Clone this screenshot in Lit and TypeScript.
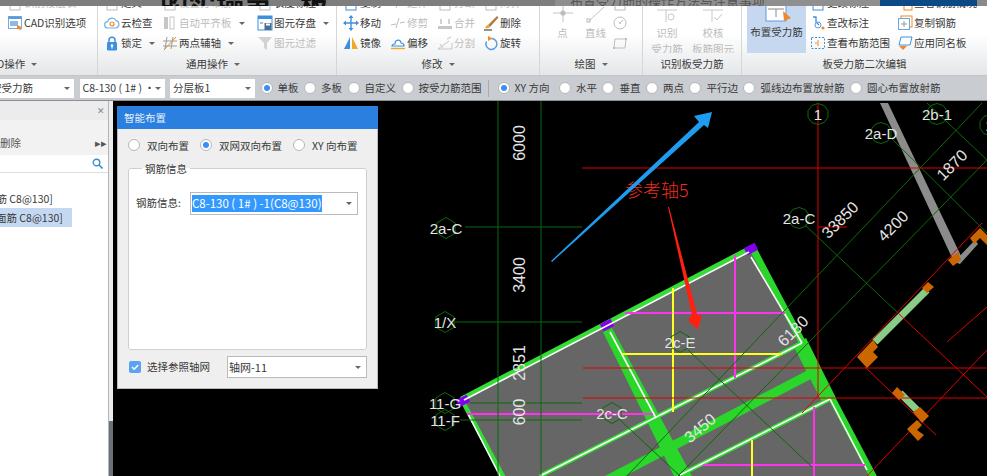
import { LitElement, html, css, svg, nothing } from "lit";
import { customElement } from "lit/decorators.js";

const BLUE = "#3f8fe0";
const ORANGE = "#f0882a";
const GREY = "#c6c6c6";

// small ribbon icons, all on a 16x16 box
const icons: Record<string, unknown> = {
  cad: svg`<rect x="1.5" y="1.5" width="13" height="12" fill="#fff" stroke="#7fa9d6"/><rect x="1.5" y="1.5" width="13" height="2.5" fill="#5a9be0"/><rect x="3" y="6" width="8" height="5" fill="#8db9ea"/><path d="M10 10l5 2-2 1 1 2-1 .5-1-2-2 1z" fill="${ORANGE}"/>`,
  cloud: svg`<path d="M4 13a3.2 3.2 0 0 1-.3-6.4A4.4 4.4 0 0 1 12 5.6 3.8 3.8 0 0 1 12 13z" fill="#fff" stroke="#6db3ee" stroke-width="1.2"/><circle cx="8" cy="9" r="2" fill="none" stroke="${ORANGE}" stroke-width="1.2"/>`,
  lock: svg`<path d="M5 8V5.2a3 3 0 0 1 6 0V8" fill="none" stroke="${BLUE}" stroke-width="1.5"/><rect x="3" y="7" width="10" height="8.5" rx="1.2" fill="${BLUE}"/><circle cx="8" cy="10.5" r="1.3" fill="#fff"/><rect x="7.4" y="10.5" width="1.2" height="3" fill="#fff"/>`,
  level: svg`<rect x="2" y="2" width="4" height="12" fill="${GREY}"/><rect x="8" y="2" width="4" height="12" fill="none" stroke="${GREY}"/>`,
  axis: svg`<path d="M5 2L3 14M11 2L9 14M1 6h14M1 11h14" stroke="#9a9a9a" fill="none"/><path d="M2 15L14 2" stroke="${ORANGE}"/>`,
  save: svg`<rect x="1" y="1" width="14" height="14" fill="#fff" stroke="${BLUE}"/><rect x="1" y="1" width="14" height="3" fill="${BLUE}"/><rect x="7.5" y="8" width="7" height="7" fill="#4a6f96"/><rect x="9" y="8.5" width="4" height="2" fill="#fff"/><rect x="3" y="7" width="3" height="2" fill="#9cc3ec"/>`,
  filter: svg`<path d="M1 2h14l-5 6v7l-3-2V8z" fill="#d2d2d2"/>`,
  move: svg`<path d="M8 2v12M2 8h12" stroke="${BLUE}" stroke-width="1.4"/><path d="M8 0l2.5 3h-5zM8 16l2.5-3h-5zM0 8l3-2.5v5zM16 8l-3-2.5v5z" fill="${BLUE}"/>`,
  trim: svg`<path d="M1 10l5-1M10 8l5-1M9 3L6 13" stroke="#bdbdbd" fill="none"/>`,
  mirror: svg`<path d="M7 2v12H1z" fill="${BLUE}"/><path d="M9 2l6 12H9z" fill="#f4a62a"/>`,
  offset: svg`<path d="M2 11c0-2 2-2 3-2 0-5 6-5 6-1 2 0 3 1 3 3z" fill="#fff" stroke="${BLUE}" stroke-width="1.2"/><path d="M1 13.5h14" stroke="#f4a62a" stroke-width="1.4"/>`,
  merge: svg`<path d="M1 11h14v3H1z" fill="${GREY}"/><path d="M4 4v5M12 4v5" stroke="${GREY}" stroke-width="1.6"/>`,
  split: svg`<path d="M1 14h14V8M1 14L12 6M3 9l3 4" stroke="${GREY}" fill="none"/><path d="M10 4l4-2" stroke="${GREY}"/>`,
  del: svg`<path d="M5 10L14 1l1.5 1.5L7 12z" fill="#b77a3a"/><path d="M2 13c1-2 2-3 3-3l2 2c-1 1-3 2-5 1z" fill="#e9a33c"/><path d="M1 15h8" stroke="#222"/>`,
  rotate: svg`<path d="M8.5 3.5a5.5 5.5 0 1 1-5 3" fill="none" stroke="#4f9fe8" stroke-width="1.5"/><path d="M5 1l4.5 2.5L5 6z" fill="${ORANGE}"/>`,
  circle: svg`<circle cx="8" cy="8" r="6" fill="none" stroke="#bdbdbd"/><circle cx="8" cy="8" r="1" fill="#bdbdbd"/><path d="M8 8l3-3" stroke="#bdbdbd"/>`,
  rect: svg`<path d="M3 4h11l-1 9H2z" fill="none" stroke="#bdbdbd"/><rect x="1" y="12" width="2" height="2" fill="#bdbdbd"/><rect x="13" y="3" width="2" height="2" fill="#bdbdbd"/>`,
  faint: svg`<rect x="3" y="6" width="10" height="9" fill="none" stroke="#bdbdbd"/>`,
  blue: svg`<rect x="3" y="8" width="10" height="7" fill="none" stroke="${BLUE}"/>`,
  edit: svg`<path d="M3 2h3v5l3 3" fill="none" stroke="${BLUE}" stroke-width="1.3"/><circle cx="8" cy="10" r="3" fill="none" stroke="#5a9be0"/><circle cx="13" cy="13" r="1.6" fill="${ORANGE}"/>`,
  range: svg`<rect x="1.5" y="2.5" width="13" height="11" fill="none" stroke="${BLUE}" stroke-dasharray="2 1.5"/><path d="M8 5v6M5 8h2" stroke="${ORANGE}" fill="none"/>`,
  copy: svg`<rect x="4" y="1" width="11" height="11" fill="none" stroke="${ORANGE}"/><rect x="1.5" y="3.5" width="11" height="11" fill="#fff" stroke="#6aa5e0"/><path d="M7 6v6M4 9h6" stroke="#999"/>`,
  apply: svg`<path d="M4 2h11l-2 8H2z" fill="#fff" stroke="${BLUE}"/><path d="M2 11h8l-4 4z" fill="${ORANGE}"/>`,
  spot: svg`<rect x="7" y="7" width="8" height="8" fill="none" stroke="${ORANGE}"/>`,
};

type Item = { t?: string; i?: string; off?: boolean; caret?: boolean };
type Col = { w: number; items: Item[] };

const general: Col[] = [
  { w: 58, items: [{ t: "定义", i: "faint" }, { t: "云检查", i: "cloud" }, { t: "锁定", i: "lock", caret: true }] },
  { w: 95, items: [{ t: "设置分布筋", i: "faint", off: true }, { t: "自动平齐板", i: "level", off: true, caret: true }, { t: "两点辅轴", i: "axis", caret: true }] },
  { w: 70, items: [{ t: "长度标注", i: "faint" }, { t: "图元存盘", i: "save", caret: true }, { t: "图元过滤", i: "filter", off: true }] },
];
const modify: Col[] = [
  { w: 47, items: [{ t: "复制", i: "blue" }, { t: "移动", i: "move" }, { t: "镜像", i: "mirror" }] },
  { w: 47, items: [{ t: "延伸", i: "trim", off: true }, { t: "修剪", i: "trim", off: true }, { t: "偏移", i: "offset" }] },
  { w: 46, items: [{ t: "打断", i: "faint", off: true }, { t: "合并", i: "merge", off: true }, { t: "分割", i: "split", off: true }] },
  { w: 50, items: [{ t: "对齐", i: "faint", off: true }, { t: "删除", i: "del" }, { t: "旋转", i: "rotate" }] },
];
const second: Col[] = [
  { w: 87, items: [{ t: "更改标注", i: "blue" }, { t: "查改标注", i: "edit" }, { t: "查看布筋范围", i: "range" }] },
  { w: 85, items: [{ t: "查看钢筋情况", i: "spot" }, { t: "复制钢筋", i: "copy" }, { t: "应用同名板", i: "apply" }] },
];

const barRadios = [
  { t: "单板", on: true },
  { t: "多板" },
  { t: "自定义" },
  { t: "按受力筋范围" },
  { sep: true },
  { t: "XY 方向", on: true, wide: true },
  { t: "水平" },
  { t: "垂直" },
  { t: "两点" },
  { t: "平行边" },
  { t: "弧线边布置放射筋" },
  { t: "圆心布置放射筋" },
];

// canvas geometry, in page coordinates (the viewBox is offset to match)
type Seg = [number, number, number, number];
const darkGreen: Seg[] = [
  [498, 101, 498, 476], [541, 101, 541, 476],
  [465, 227, 582, 227], [455, 322, 582, 322], [470, 403, 582, 403], [460, 420, 582, 420],
  [982, 103, 627, 476], [987, 160, 678, 476],
  [805, 225, 898, 313], [890, 137, 987, 233], [927, 103, 987, 160],
  [688, 350, 812, 467], [620, 420, 680, 476],
];
const red: Seg[] = [
  [582, 168, 987, 168], [818, 103, 818, 398], [583, 368, 987, 368], [583, 398, 987, 398],
  [818, 227, 847, 227], [802, 413, 982, 223], [867, 476, 987, 350], [947, 342, 987, 307],
  [898, 313, 987, 397], [865, 367, 936, 435],
];
const magenta: Seg[] = [[467, 414, 653, 414], [625, 313, 785, 313], [735, 255, 735, 378], [703, 465, 865, 465], [814, 407, 814, 476]];
const yellow: Seg[] = [[673, 288, 673, 412], [622, 354, 782, 354], [752, 440, 752, 476]];
const whites: Seg[] = [
  [464, 400, 749, 252], [468, 414, 500, 476], [610, 332, 656, 418],
  [751, 257, 802, 343], [830, 399, 867, 470], [540, 476, 802, 343], [678, 476, 830, 399],
];
const oranges = [
  "857,357 873,340 878,347 873,352 878,357 867,368",
  "922,288 928,282 934,287 927,293",
  "948,260 958,252 961,260 953,266",
  "970,238 980,228 987,235 987,245 980,238 974,244",
  "892,393 897,387 905,395 899,400",
  "913,412 920,407 929,416 922,423",
  "907,429 917,420 922,425 917,430 924,435 918,441",
];
const dims: [string, number, number, number][] = [
  ["6000", 519, 143, -90], ["3400", 519, 275, -90], ["2851", 519, 363, -90], ["600", 519, 412, -90],
  ["33850", 840, 220, -45], ["4200", 893, 226, -45], ["1870", 952, 165, -45], ["6180", 793, 331, -45], ["3450", 700, 428, -40],
];
const marks: [string, number, number, number][] = [
  ["2a-C", 446, 228, 6], ["1/X", 445, 322, 6], ["11-G", 445, 403, 6], ["11-F", 445, 420, 6],
  ["2c-E", 680, 342, 6], ["2c-C", 612, 413, 6],
  ["1", 818, 114, 10], ["2a-D", 881, 133, 10], ["2b-1", 937, 114, 10], ["2a-C", 799, 218, 10], ["2", 990, 125, 10],
];

function ring(cx: number, cy: number, n: number) {
  const pts = [];
  for (let k = 0; k < n; k++) {
    const a = (Math.PI * 2 * k) / n - Math.PI / 2;
    pts.push(`${(cx + 10.5 * Math.cos(a)).toFixed(1)},${(cy + 10.5 * Math.sin(a)).toFixed(1)}`);
  }
  return pts.join(" ");
}

@customElement("app-root")
export class AppRoot extends LitElement {
  static styles = css`
    :host {
      display: flex;
      flex-direction: column;
      width: 987px;
      height: 476px;
      overflow: hidden;
      font: 10.5px/1.3 "Noto Sans CJK SC", "Liberation Sans", sans-serif;
      color: #3a3a3a;
      background: #000;
    }
    .ribbon {
      position: relative;
      display: flex;
      flex: none;
      height: 75px;
      overflow: hidden;
      background: linear-gradient(#fff 45%, #e4e6e8);
      border-bottom: 1px solid #c2c4c8;
    }
    .band {
      position: absolute;
      top: 0;
      left: 0;
      right: 0;
      height: 6px;
      display: flex;
      overflow: hidden;
      background: #8a8a8a;
    }
    .band div { flex: none; overflow: hidden; box-sizing: border-box; }
    .band .stub {
      width: 555px;
      padding-left: 160px;
      background: #7e7e7e;
      font-size: 28px;
      font-weight: 700;
      line-height: 10px;
      color: #111;
      white-space: nowrap;
    }
    .band .mid {
      width: 325px;
      padding-left: 15px;
      background: #8f8f8f;
      font-size: 13px;
      line-height: 2px;
      color: #555;
      white-space: nowrap;
    }
    .band .navy { width: 97px; background: #0c4a86; }
    .group {
      display: flex;
      flex-direction: column;
      flex: none;
      height: 75px;
      box-sizing: border-box;
      border-right: 1px solid #d4d6d8;
    }
    .g1 { width: 98px; }
    .g2 { width: 239px; }
    .g3 { width: 203px; }
    .g4 { width: 103px; }
    .g5 { width: 99px; }
    .g6 { flex: 1; border-right: none; }
    .body {
      flex: 1;
      display: flex;
      align-items: flex-end;
      min-height: 0;
      overflow: hidden;
    }
    .g1 .body { padding-left: 7px; }
    .g2 .body { padding-left: 6px; }
    .g3 .body { padding-left: 6px; }
    .g6 .body { padding-left: 5px; }
    .col { display: flex; flex-direction: column; flex: none; }
    .row {
      display: flex;
      align-items: center;
      gap: 1px;
      height: 20px;
      white-space: nowrap;
    }
    .row svg { width: 16px; height: 16px; flex: none; }
    .off { color: #bcbcbc; }
    .caret {
      display: inline-block;
      width: 0;
      height: 0;
      margin-left: 6px;
      border: 3px solid transparent;
      border-top: 3px solid #666;
      border-bottom: none;
    }
    .label {
      flex: none;
      height: 22px;
      display: flex;
      align-items: center;
      justify-content: center;
      white-space: nowrap;
    }
    .g1 .label { justify-content: flex-start; margin-left: -16px; }
    .g2 .label { padding-right: 8px; }
    .tall {
      display: flex;
      flex-direction: column;
      align-items: center;
      flex: none;
      height: 53px;
      color: #bcbcbc;
      line-height: 16px;
      text-align: center;
    }
    .tall svg { flex: none; width: 24px; height: 21px; margin-top: 4px; }
    .dot-col { width: 33px; }
    .rec-col { width: 46px; }
    .g4 .body { padding-left: 6px; }
    .g5 .body { padding-left: 1px; }
    .big {
      width: 59px;
      height: 53px;
      margin-right: 4px;
      flex: none;
      display: flex;
      flex-direction: column;
      align-items: center;
      background: #c6d8f0;
      white-space: nowrap;
    }
    .big svg { width: 28px; height: 24px; flex: none; margin-bottom: 1px; }
    .bar {
      flex: none;
      height: 24px;
      display: flex;
      align-items: center;
      gap: 5.5px;
      background: #c9ccd1;
      border-bottom: 1px solid #8d8f93;
      white-space: nowrap;
    }
    .combo {
      position: relative;
      flex: none;
      height: 19px;
      display: flex;
      align-items: center;
      overflow: hidden;
      padding-left: 3px;
      box-sizing: border-box;
      background: #fff;
    }
    .combo .caret { position: absolute; right: 4px; top: 8px; margin: 0; }
    .c1 { width: 74px; }
    .c1 span { margin-left: -12px; }
    .c2, .c3 { width: 85px; }
    .radio {
      display: flex;
      align-items: center;
      gap: 5px;
      flex: none;
    }
    .radio.wide { margin-right: 4px; }
    .knob {
      width: 12px;
      height: 12px;
      flex: none;
      box-sizing: border-box;
      display: flex;
      align-items: center;
      justify-content: center;
      border: 1px solid #b4b6ba;
      border-radius: 50%;
      background: #fff;
    }
    .knob.on::after {
      content: "";
      width: 6px;
      height: 6px;
      border-radius: 50%;
      background: #3d8df2;
    }
    .sep { width: 1px; height: 17px; margin: 0 3px 0 1px; background: #a9abb0; flex: none; }
    .main { flex: 1; display: flex; min-height: 0; }
    .side {
      flex: none;
      width: 108px;
      display: flex;
      flex-direction: column;
      background: #fff;
      overflow: hidden;
      white-space: nowrap;
    }
    .side-head {
      height: 19px;
      flex: none;
      display: flex;
      justify-content: flex-end;
      align-items: center;
      padding-right: 3px;
      color: #888;
      font-size: 9px;
      background: #ececec;
    }
    .side-tools {
      height: 35px;
      flex: none;
      display: flex;
      align-items: flex-end;
      justify-content: space-between;
      padding: 0 1px 5px 0;
      box-sizing: border-box;
      background: #f2f2f2;
      color: #555;
    }
    .side-search {
      height: 17px;
      flex: none;
      display: flex;
      justify-content: flex-end;
      align-items: center;
      padding-right: 5px;
      border-bottom: 1px solid #ddd;
    }
    .side-search svg { width: 11px; height: 11px; }
    .list { padding-top: 16px; }
    .line {
      height: 19px;
      width: 72px;
      display: flex;
      align-items: center;
      overflow: hidden;
    }
    .line.sel { background: #c5d8f2; }
    .line span { flex: none; margin-left: -14px; }
    .line.sel span { margin-left: -4px; }
    .split {
      flex: none;
      width: 5px;
      box-sizing: border-box;
      display: flex;
      flex-direction: column;
      border-left: 1px solid #b3b5b8;
    }
    .split i { display: block; flex: 1; background: #eceded; }
    .split b { display: block; height: 55px; background: #6b7177; }
    .canvas { position: relative; flex: 1; min-width: 0; background: #000; }
    .canvas > svg { display: block; width: 100%; height: 100%; }
    .dim { font: 16px "Liberation Sans", sans-serif; fill: #e4e4e4; text-anchor: middle; dominant-baseline: central; }
    .mark { font-size: 15px; }
    .note { font: 300 18px "Noto Sans CJK SC", sans-serif; fill: #f02a1c; }
    .dialog {
      position: absolute;
      left: 4px;
      top: 5px;
      width: 261px;
      height: 283px;
      box-sizing: border-box;
      display: flex;
      flex-direction: column;
      background: #efefef;
      border: 1px solid #b7bac2;
      border-top: none;
    }
    .title {
      flex: none;
      height: 23px;
      display: flex;
      align-items: center;
      margin: 0 -1px;
      padding-left: 7px;
      background: #2b7fdf;
      color: #e6f0fb;
    }
    .modes {
      flex: none;
      display: flex;
      align-items: center;
      height: 33px;
      padding-left: 10px;
      gap: 11px;
    }
    .modes .radio { gap: 7px; }
    fieldset {
      flex: 1;
      min-height: 0;
      margin: 0 10px;
      padding: 16px 8px 0 7px;
      background: #fff;
      border: 1px solid #cdcfd3;
      border-radius: 3px;
    }
    legend { padding: 0 3px; margin-left: 6px; }
    .field { display: flex; align-items: center; gap: 9px; }
    .drop {
      position: relative;
      flex: none;
      display: flex;
      align-items: center;
      box-sizing: border-box;
      background: #fff;
      border: 1px solid #b9bbbf;
      padding-left: 1px;
    }
    .drop .caret { position: absolute; right: 5px; top: 9px; margin: 0; }
    .d1 { width: 168px; height: 23px; }
    .d1 span { background: #3399ff; color: #fff; padding: 1px 0; font-size: 11.5px; }
    .foot {
      flex: none;
      height: 38px;
      display: flex;
      align-items: center;
      padding: 0 0 4px 11px;
      box-sizing: border-box;
    }
    .check {
      width: 12px;
      height: 12px;
      flex: none;
      margin-right: 6px;
      border-radius: 2px;
      background: #5aa2f2;
      display: flex;
    }
    .check svg { width: 12px; height: 12px; }
    .d2 { width: 140px; height: 22px; margin-left: 17px; font-size: 11px; }
  `;

  private col(c: Col) {
    return html`<div class="col" style="width:${c.w}px">${c.items.map(
      (it) => html`<div class="row ${it.off ? "off" : ""}">
        ${it.i ? html`<svg viewBox="0 0 16 16">${icons[it.i]}</svg>` : nothing}
        <span>${it.t}</span>${it.caret ? html`<i class="caret"></i>` : nothing}
      </div>`
    )}</div>`;
  }

  private radio(text: string, on?: boolean, wide?: boolean) {
    return html`<div class="radio ${wide ? "wide" : ""}"><div class="knob ${on ? "on" : ""}"></div><span>${text}</span></div>`;
  }

  private ribbon() {
    return html`<div class="ribbon">
      <div class="group g1">
        <div class="body">${this.col({
          w: 88,
          items: [{ t: "识别楼层表", i: "faint", off: true }, { t: "CAD识别选项", i: "cad" }, {}],
        })}</div>
        <div class="label">CAD操作<i class="caret"></i></div>
      </div>
      <div class="group g2">
        <div class="body">${general.map((c) => this.col(c))}</div>
        <div class="label">通用操作<i class="caret"></i></div>
      </div>
      <div class="group g3">
        <div class="body">${modify.map((c) => this.col(c))}</div>
        <div class="label">修改<i class="caret"></i></div>
      </div>
      <div class="group g4">
        <div class="body">
          <div class="tall dot-col">
            <svg viewBox="0 0 24 21"><path d="M2 9h20M12 2v16" stroke="#c4c4c4" fill="none"/><circle cx="12" cy="9" r="2.6" fill="#bdbdbd"/></svg>点
          </div>
          <div class="tall dot-col">
            <svg viewBox="0 0 24 21"><path d="M5 17L20 3" stroke="#c4c4c4" fill="none"/><rect x="3" y="15" width="3" height="3" fill="none" stroke="#bbb"/></svg>直线
          </div>
          <div class="col">${["faint", "circle", "rect"].map(
            (n) => html`<div class="row"><svg viewBox="0 0 16 16">${icons[n]}</svg></div>`
          )}</div>
        </div>
        <div class="label">绘图<i class="caret"></i></div>
      </div>
      <div class="group g5">
        <div class="body">
          <div class="tall rec-col">
            <svg viewBox="0 0 24 21"><path d="M2 6h20M11 6v12" stroke="#c8c8c8" fill="none"/><circle cx="16" cy="13" r="3" fill="none" stroke="#c8c8c8"/></svg>识别<br />受力筋
          </div>
          <div class="tall rec-col">
            <svg viewBox="0 0 24 21"><path d="M2 6h20M11 6v12" stroke="#c8c8c8" fill="none"/><path d="M13 13l3 3 5-6" stroke="#c8c8c8" fill="none"/></svg>校核<br />板筋图元
          </div>
        </div>
        <div class="label">识别板受力筋</div>
      </div>
      <div class="group g6">
        <div class="body">
          <div class="big">
            <svg viewBox="0 0 28 24"><rect x="3" y="-4" width="20" height="25" fill="#fff" stroke="#5d9be0"/><path d="M5 9h16M13 9v8" stroke="#8a8a8a" fill="none"/><path d="M20 11l8 7-7 3z" fill="${ORANGE}"/></svg>
            <span>布置受力筋</span>
          </div>
          ${second.map((c) => this.col(c))}
        </div>
        <div class="label">板受力筋二次编辑</div>
      </div>
      <div class="band">
        <div class="stub">的实操第二板</div>
        <div class="mid">布置受力筋的操作方法与注意事项</div>
        <div class="navy"></div>
      </div>
    </div>`;
  }

  private toolbar() {
    return html`<div class="bar">
      <div class="combo c1"><span>按受力筋</span><i class="caret"></i></div>
      <div class="combo c2"><span>C8-130 ( 1# ) ·</span><i class="caret"></i></div>
      <div class="combo c3"><span>分层板1</span><i class="caret"></i></div>
      ${barRadios.map((r) => (r.sep ? html`<div class="sep"></div>` : this.radio(r.t as string, r.on, r.wide)))}
    </div>`;
  }

  private side() {
    return html`<div class="side">
      <div class="side-head">✕</div>
      <div class="side-tools"><span>删除</span><span>▸▸</span></div>
      <div class="side-search">
        <svg viewBox="0 0 11 11"><circle cx="4.5" cy="4.5" r="3.3" fill="none" stroke="#3a8fd0" stroke-width="1.4"/><path d="M7 7l3.5 3.5" stroke="#3a8fd0" stroke-width="1.6"/></svg>
      </div>
      <div class="list">
        <div class="line"><span>底筋 C8@130]</span></div>
        <div class="line sel"><span>面筋 C8@130]</span></div>
      </div>
    </div>
    <div class="split"><i></i><b></b></div>`;
  }

  private drawing() {
    const seg = (list: Seg[], color: string, w: number) =>
      list.map((s) => svg`<line x1=${s[0]} y1=${s[1]} x2=${s[2]} y2=${s[3]} stroke=${color} stroke-width=${w} />`);
    return svg`<svg viewBox="113 101 874 375">
      <polygon points="460,400 752,247 875,480 503,480" fill="#666" />
      ${seg([[461, 399, 752, 247], [463, 402, 505, 480], [540, 476, 802, 343], [678, 476, 830, 399]], "#33dd33", 4.5)}
      ${seg([[752, 247, 875, 480]], "#2bd62b", 7)}
      <polygon points="603,332 612,328 692,476 674,476" fill="#2bd62b" />
      <polygon points="810,369 813,378 625,476 605,476" fill="#2bd62b" />
      <polygon points="793,345 806,338 836,398 822,402" fill="#2bd62b" />
      ${[[751, 249], [607, 325], [463, 401]].map(
        (p) => svg`<rect x=${p[0] - 6} y=${p[1] - 4} width="12" height="8" fill="#8000ee" transform="rotate(-27 ${p[0]} ${p[1]})" />`
      )}
      ${seg(whites, "#fff", 1.6)}
      ${seg(magenta, "#ff33ee", 2)}
      ${seg(yellow, "#ffff22", 2)}
      <polygon points="880,103 888,103 962,258 954,262" fill="#8c8c8c" />
      <polygon points="954,262 975,240 978,244 960,264" fill="#8c8c8c" />
      <line x1="875" y1="342" x2="927" y2="290" stroke="#88cc88" stroke-width="7" />
      <line x1="900" y1="393" x2="917" y2="410" stroke="#88cc88" stroke-width="7" />
      ${seg(darkGreen, "#0b6a0b", 1)}
      ${seg(red, "#e00000", 1)}
      ${oranges.map((p) => svg`<polygon points=${p} fill="#cc6600" />`)}
      ${marks.map((m) => svg`<polygon points=${ring(m[1], m[2], m[3])} fill="none" stroke="#0b6a0b" />`)}
      ${marks.map((m) => svg`<text class="dim mark" x=${m[1]} y=${m[2]}>${m[0]}</text>`)}
      ${dims.map((d) => svg`<text class="dim" x=${d[1]} y=${d[2]} transform="rotate(${d[3]} ${d[1]} ${d[2]})">${d[0]}</text>`)}
      <text class="note" x="625" y="197">参考轴5</text>
      <polygon points="551,261 699,122 694,116 712,112 708,128 704,125 552,262" fill="#1e9cf0" />
      <polygon points="668,207 669,207 697,314 702,316 697.5,329.5 688,320 692,315" fill="#ff2010" />
    </svg>`;
  }

  private dialog() {
    return html`<div class="dialog">
      <div class="title">智能布置</div>
      <div class="modes">
        ${this.radio("双向布置")}${this.radio("双网双向布置", true)}${this.radio("XY 向布置")}
      </div>
      <fieldset>
        <legend>钢筋信息</legend>
        <div class="field">
          <span>钢筋信息:</span>
          <div class="drop d1"><span>C8-130 ( 1# ) -1(C8@130)</span><i class="caret"></i></div>
        </div>
      </fieldset>
      <div class="foot">
        <div class="check"><svg viewBox="0 0 12 12"><path d="M3 6l2.2 2.2L9.2 4" fill="none" stroke="#fff" stroke-width="1.6"/></svg></div>
        <span>选择参照轴网</span>
        <div class="drop d2"><span>轴网-11</span><i class="caret"></i></div>
      </div>
    </div>`;
  }

  render() {
    return html`${this.ribbon()}${this.toolbar()}
      <div class="main">
        ${this.side()}
        <div class="canvas">${this.drawing()}${this.dialog()}</div>
      </div>`;
  }
}
